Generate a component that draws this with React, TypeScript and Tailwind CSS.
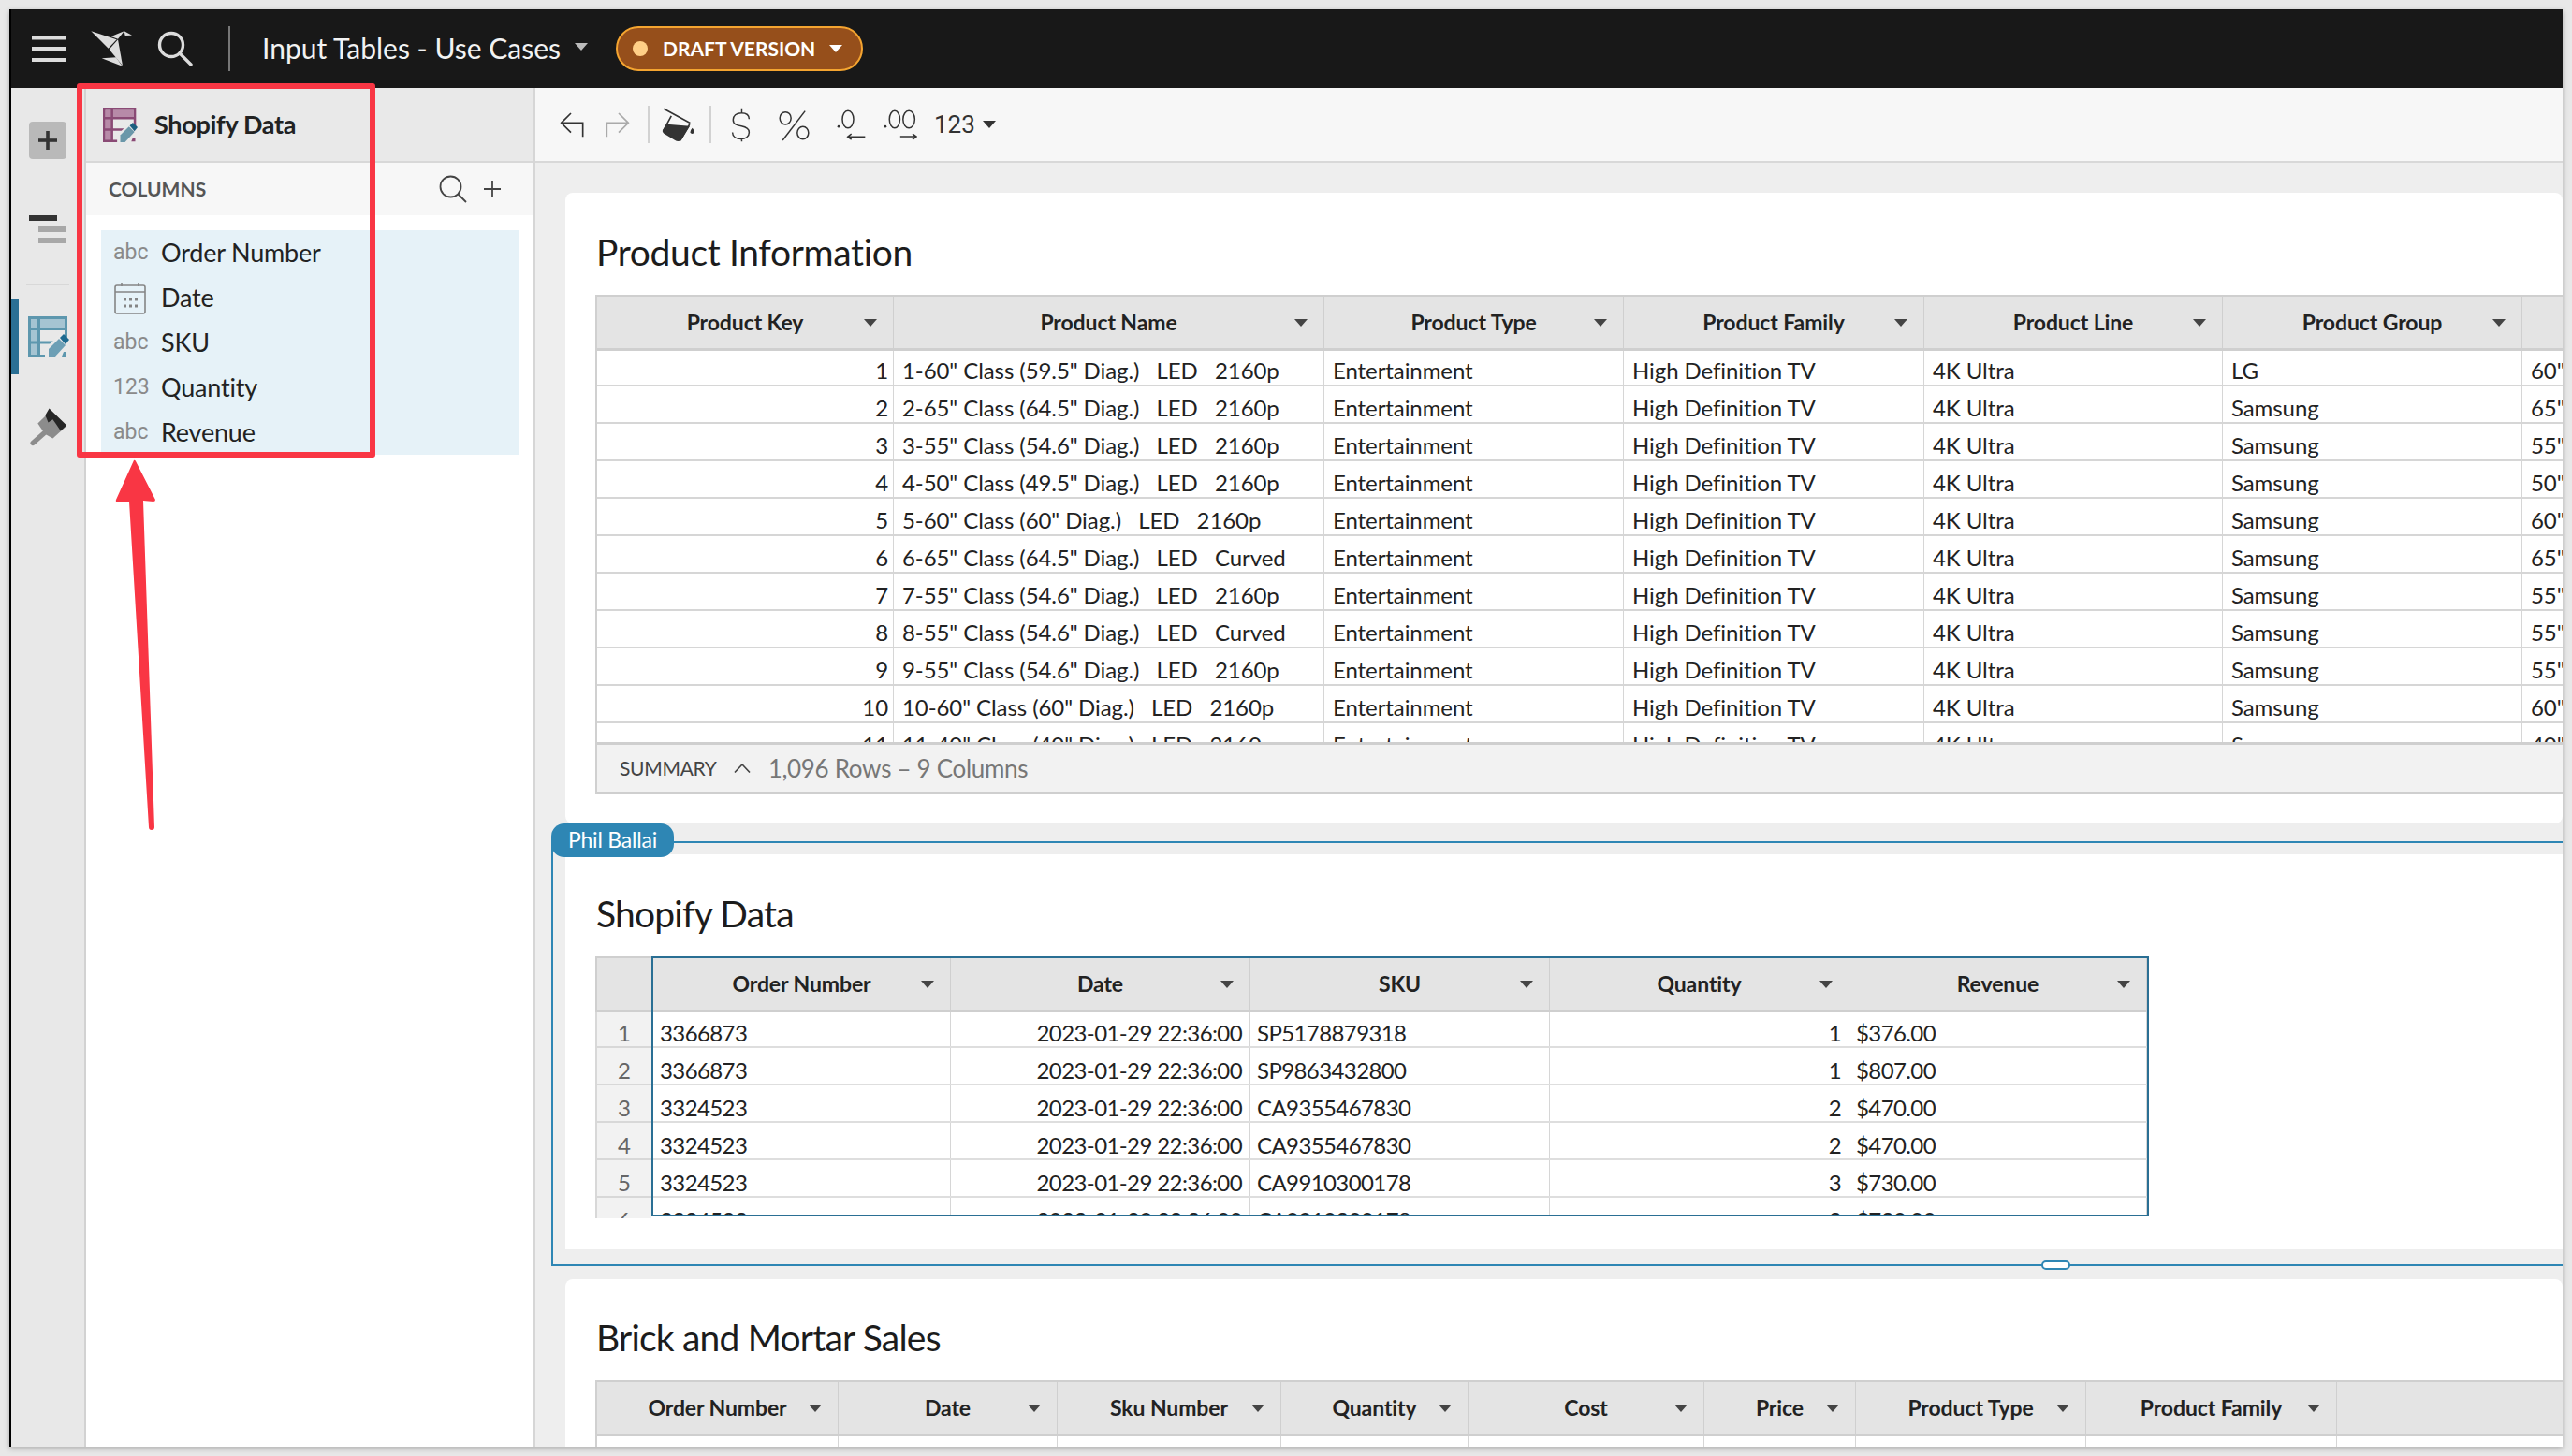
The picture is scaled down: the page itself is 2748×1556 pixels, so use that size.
import React from 'react';

const SANS = "font-['Lato','Noto_Sans',sans-serif]";

const productCols = [
  { label: 'Product Key', w: 'w-[317px]', right: true },
  { label: 'Product Name', w: 'w-[460px]' },
  { label: 'Product Type', w: 'w-[320px]' },
  { label: 'Product Family', w: 'w-[321px]' },
  { label: 'Product Line', w: 'w-[319px]' },
  { label: 'Product Group', w: 'w-[320px]' },
  { label: '', w: 'w-[80px]' },
];

const productRows = [
  ['1', '1-60" Class (59.5" Diag.)   LED   2160p', 'LG', '60"'],
  ['2', '2-65" Class (64.5" Diag.)   LED   2160p', 'Samsung', '65"'],
  ['3', '3-55" Class (54.6" Diag.)   LED   2160p', 'Samsung', '55"'],
  ['4', '4-50" Class (49.5" Diag.)   LED   2160p', 'Samsung', '50"'],
  ['5', '5-60" Class (60" Diag.)   LED   2160p', 'Samsung', '60"'],
  ['6', '6-65" Class (64.5" Diag.)   LED   Curved', 'Samsung', '65"'],
  ['7', '7-55" Class (54.6" Diag.)   LED   2160p', 'Samsung', '55"'],
  ['8', '8-55" Class (54.6" Diag.)   LED   Curved', 'Samsung', '55"'],
  ['9', '9-55" Class (54.6" Diag.)   LED   2160p', 'Samsung', '55"'],
  ['10', '10-60" Class (60" Diag.)   LED   2160p', 'Samsung', '60"'],
  ['11', '11-40" Class (40" Diag.)   LED   2160p', 'Samsung', '40"'],
];

const shopifyCols = [
  { label: 'Order Number', w: 'w-[318px]' },
  { label: 'Date', w: 'w-[320px]' },
  { label: 'SKU', w: 'w-[320px]' },
  { label: 'Quantity', w: 'w-[320px]' },
  { label: 'Revenue', w: 'w-[318px]' },
];

const shopifyRows = [
  ['3366873', 'SP5178879318', '1', '$376.00'],
  ['3366873', 'SP9863432800', '1', '$807.00'],
  ['3324523', 'CA9355467830', '2', '$470.00'],
  ['3324523', 'CA9355467830', '2', '$470.00'],
  ['3324523', 'CA9910300178', '3', '$730.00'],
  ['3324523', 'CA9910300178', '3', '$730.00'],
];

const brickCols = [
  { label: 'Order Number', w: 'w-[258px]' },
  { label: 'Date', w: 'w-[234px]' },
  { label: 'Sku Number', w: 'w-[239px]' },
  { label: 'Quantity', w: 'w-[200px]' },
  { label: 'Cost', w: 'w-[252px]' },
  { label: 'Price', w: 'w-[162px]' },
  { label: 'Product Type', w: 'w-[246px]' },
  { label: 'Product Family', w: 'w-[268px]' },
];

const columns = [
  { type: 'abc', name: 'Order Number' },
  { type: 'date', name: 'Date' },
  { type: 'abc', name: 'SKU' },
  { type: '123', name: 'Quantity' },
  { type: 'abc', name: 'Revenue' },
];

const Caret = ({ color = 'fill-[#444]' }: { color?: string }) => (
  <svg viewBox="0 0 14 8" className={`w-[14px] h-[8px] ${color}`}>
    <path d="M0 0h14L7 8z" />
  </svg>
);

const TableEditIcon = ({ main, light, pencil, tip }: { main: string; light: string; pencil: string; tip: string }) => (
  <svg viewBox="0 0 44 44" className="w-full h-full">
    <rect x="3" y="3" width="36" height="10" fill={light} />
    <rect x="3" y="14" width="8" height="28" fill={light} />
    <rect x="1.5" y="1.5" width="39" height="41" fill="none" stroke={main} strokeWidth="3" />
    <path d="M0 13.5h41M0 28h30M11.5 2v41" stroke={main} strokeWidth="3" fill="none" />
    <path d="M18 44v-9l17-17 9 8v18z" fill="#e9e9e9" />
    <path d="M38 38h3v5h-5zM35 43" fill={main} />
    <path d="M22 44v-9l11-11 7 7-12 13z" fill={pencil} />
    <path d="M34 23l4-4 6 6-4 5z" fill={tip} />
  </svg>
);

function Logo() {
  return (
    <svg viewBox="225 28 144 126" className="w-[48px] h-[42px]" fill="#dcdcdc">
      <path d="M232 35l82 27-27 28z" />
      <path d="M290 93l28-31 15 84z" />
      <path d="M266 122l46-3 20 28z" />
      <path d="M296 52l42-17-20 25z" />
      <path d="M338 35l25 13-22 1z" />
    </svg>
  );
}

function TopBar() {
  return (
    <div className="h-[84px] shrink-0 bg-[#181818] flex items-center">
      <svg viewBox="0 0 36 28" className="ml-[22px] w-[36px] h-[28px]" fill="#dcdcdc">
        <rect y="0" width="36" height="4.5" />
        <rect y="12" width="36" height="4.5" />
        <rect y="24" width="36" height="4.5" />
      </svg>
      <div className="ml-[25px]">
        <Logo />
      </div>
      <svg viewBox="0 0 38 38" className="ml-[25px] w-[38px] h-[38px]" fill="none" stroke="#dcdcdc" strokeWidth="3.4">
        <circle cx="15" cy="15" r="12.5" />
        <path d="M24 24l12 12" strokeLinecap="round" />
      </svg>
      <div className="ml-[38px] w-[2px] h-[48px] bg-[#777]" />
      <span className={`${SANS} ml-[34px] w-[334px] pb-[2px] whitespace-nowrap text-[30px] text-[#f2f2f2]`}>Input Tables - Use Cases</span>
      <Caret color="fill-[#bbb] mb-[5px]" />
      <div className="ml-[30px] w-[264px] h-[48px] rounded-full bg-[#964f1b] border-2 border-[#f4a430] flex items-center">
        <span className="ml-[16px] w-[16px] h-[16px] rounded-full bg-[#ffcf87]" />
        <span className={`${SANS} ml-[16px] w-[178px] whitespace-nowrap text-[21px] font-bold text-white`}>DRAFT VERSION</span>
        <Caret color="fill-white" />
      </div>
    </div>
  );
}

function Rail() {
  return (
    <div className="w-[80px] shrink-0 bg-[#e8e8e8] border-r-2 border-[#d2d2d2] flex flex-col">
      <div className="ml-[19px] mt-[36px] w-[40px] h-[40px] rounded-[4px] bg-[#b9b9b9] flex items-center justify-center">
        <svg viewBox="0 0 20 20" className="w-[20px] h-[20px]" fill="#333">
          <rect x="8.2" width="3.6" height="20" />
          <rect y="8.2" width="20" height="3.6" />
        </svg>
      </div>
      <svg viewBox="0 0 40 30" className="ml-[19px] mt-[60px] w-[40px] h-[30px]">
        <rect width="30" height="6" fill="#333" />
        <rect x="10" y="12" width="30" height="6" fill="#a8a8a8" />
        <rect x="10" y="24" width="30" height="6" fill="#a8a8a8" />
      </svg>
      <div className="ml-[16px] mt-[43px] w-[46px] h-[2px] bg-[#d8d8d8]" />
      <div className="mt-[15px] h-[80px] flex items-center">
        <div className="w-[8px] h-full bg-[#2a6f94]" />
        <div className="ml-[10px] w-[44px] h-[44px]">
          <TableEditIcon main="#5d97ae" light="#a5c4d2" pencil="#6d9fb5" tip="#1d6a90" />
        </div>
      </div>
      <svg viewBox="30 320 125 120" className="ml-[17px] mt-[35px] w-[44px] h-[42px]">
        <path d="M84 402L62 370l36-35 52 43-42 38z" fill="#8c8c8c" />
        <path d="M90 392L47 430" stroke="#8c8c8c" strokeWidth="15" strokeLinecap="round" />
        <path d="M97 324l53 52-18 17-14-21-10-14-14 9-9-22z" fill="#262626" />
      </svg>
    </div>
  );
}

function ColumnsPanel() {
  return (
    <div className="w-[480px] shrink-0 bg-white border-r-2 border-[#d6d6d6] flex flex-col">
      <div className="h-[80px] shrink-0 bg-[#e9e9e9] border-b-2 border-[#d8d8d8] flex items-center pl-[18px]">
        <div className="w-[37px] h-[37px]">
          <TableEditIcon main="#8a4a75" light="#b78aa8" pencil="#6a97a9" tip="#1c5f80" />
        </div>
        <span className={`${SANS} ml-[18px] text-[27px] font-bold tracking-[-0.3px] text-[#222]`}>Shopify Data</span>
      </div>
      <div className="h-[56px] shrink-0 bg-[#f7f7f7] flex items-center pl-[24px]">
        <span className={`${SANS} text-[21px] font-bold text-[#555]`}>COLUMNS</span>
        <svg viewBox="0 0 30 30" className="ml-auto w-[30px] h-[30px]" fill="none" stroke="#444" strokeWidth="1.8">
          <circle cx="12.5" cy="12.5" r="11" />
          <path d="M20.5 20.5L29 29" />
        </svg>
        <svg viewBox="0 0 18 18" className="ml-[18px] mr-[35px] w-[18px] h-[18px]" fill="none" stroke="#444" strokeWidth="1.8">
          <path d="M9 0v18M0 9h18" />
        </svg>
      </div>
      <div className="ml-[16px] mt-[16px] w-[446px] h-[240px] bg-[#e6f2f8] flex flex-col">
        {columns.map((c) => (
          <div key={c.name} className="h-[48px] pt-[1px] flex items-center pl-[13px]">
            <div className="w-[51px]">
              {c.type === 'date' ? (
                <svg viewBox="0 0 34 34" className="ml-[1px] w-[34px] h-[34px]" fill="none" stroke="#858585" strokeWidth="1.6">
                  <rect x="1" y="3" width="32" height="30" rx="2" />
                  <path d="M1 10h32M8 0v4M26 0v4" />
                  <path d="M10 18h3M16 18h3M22 18h3M10 25h3M16 25h3M22 25h3" strokeWidth="3" />
                </svg>
              ) : (
                <span className="font-['Roboto',sans-serif] text-[23px] text-[#8a8a8a]">{c.type}</span>
              )}
            </div>
            <span className={`${SANS} text-[27px] tracking-[-0.2px] text-[#222]`}>{c.name}</span>
          </div>
        ))}
      </div>
    </div>
  );
}

function Toolbar() {
  return (
    <div className="h-[80px] shrink-0 bg-[#f7f7f7] border-b-2 border-[#d8d8d8] flex items-center pl-[24px]">
      <svg viewBox="20 40 90 90" className="w-[30px] h-[30px]" fill="none" stroke="#333" strokeWidth="5">
        <path d="M100 125V80H32M62 49L31 80l31 31" />
      </svg>
      <svg viewBox="170 40 90 90" className="ml-[20px] w-[30px] h-[30px]" fill="none" stroke="#aaa" strokeWidth="5">
        <path d="M177 125V80h68M215 49l31 31-31 31" />
      </svg>
      <div className="ml-[16px] w-[2px] h-[40px] bg-[#d2d2d2]" />
      <svg viewBox="350 25 115 115" className="ml-[12px] w-[38px] h-[38px]">
        <path d="M360 32l85 46M384 55l-26 48M443 82l-30 52" fill="none" stroke="#333" strokeWidth="5" />
        <path d="M370 82l74 6-29 47q-10 5-20-2l-35-21q-8-7-2-14z" fill="#333" />
        <path d="M452 94q8 10 6 14a7 7 0 0 1-13 0q-1-5 7-14z" fill="#333" />
      </svg>
      <div className="ml-[14px] w-[2px] h-[40px] bg-[#d2d2d2]" />
      <svg viewBox="570 25 70 115" className="ml-[20px] w-[23px] h-[38px]" fill="none" stroke="#333" strokeWidth="4.5">
        <path d="M632 65c0-15-12-20-25-20-17 0-27 10-27 22 0 15 12 18 27 21s25 8 25 20c0 14-12 22-26 22-16 0-28-8-28-22M608 30v15M608 130v8" />
      </svg>
      <svg viewBox="720 30 110 105" className="ml-[27px] w-[37px] h-[35px]" fill="none" stroke="#333" strokeWidth="4.5">
        <ellipse cx="747" cy="61" rx="18" ry="20" />
        <ellipse cx="803" cy="108" rx="18" ry="20" />
        <path d="M810 38l-72 94" />
      </svg>
      <svg viewBox="905 30 105 110" className="ml-[25px] w-[35px] h-[37px]" fill="none" stroke="#333" strokeWidth="4.5">
        <ellipse cx="947" cy="67" rx="18" ry="28" />
        <circle cx="917" cy="90" r="4" fill="#333" stroke="none" />
        <path d="M947 123h55M958 114l-12 9 12 9" />
      </svg>
      <svg viewBox="1055 30 115 110" className="ml-[15px] w-[38px] h-[37px]" fill="none" stroke="#333" strokeWidth="4.5">
        <ellipse cx="1097" cy="67" rx="17" ry="28" />
        <ellipse cx="1143" cy="67" rx="19" ry="28" />
        <circle cx="1067" cy="90" r="4" fill="#333" stroke="none" />
        <path d="M1115 123h52M1155 114l12 9-12 9" />
      </svg>
      <span className="ml-[18px] w-[52px] font-['Roboto',sans-serif] text-[26px] text-[#333]">123</span>
      <Caret color="fill-[#333]" />
    </div>
  );
}

const HeaderCell = ({ label, w }: { label: string; w: string }) => (
  <div className={`${w} shrink-0 h-full border-r border-[#cfcfcf] grid grid-cols-[48px_1fr_48px] items-center`}>
    <span />
    <span className={`${SANS} text-center whitespace-nowrap text-[23px] font-bold tracking-[-0.1px] text-[#222]`}>{label}</span>
    {label && (
      <span className="flex justify-center">
        <Caret />
      </span>
    )}
  </div>
);

// digit-heavy cells run tighter: Lato's figures are wider than the rest of its letters
const BodyCell = ({ text, w, right, digits, first }: { text: string; w: string; right?: boolean; digits?: boolean; first?: boolean }) => (
  <div
    className={`${w} shrink-0 h-full border-r border-[#d6d6d6] ${
      digits ? 'pl-[7px] pr-[8px]' : 'pl-[9px] pr-[5px]'
    } ${
      digits ? (first ? 'pt-[8px]' : 'pt-[10px]') : first ? 'pt-[6px]' : 'pt-[8px]'
    } flex items-center overflow-hidden ${right ? 'justify-end' : ''} ${
      digits ? 'tracking-[-0.6px]' : 'tracking-[-0.08px]'
    } ${SANS} whitespace-pre text-[24px] text-[#222]`}
  >
    {text}
  </div>
);

function ProductTable() {
  const widths = productCols.map((c) => c.w);
  return (
    <div className="border-l-2 border-[#d0d0d0]">
      <div className="h-[60px] bg-[#e4e4e4] border-t-2 border-b-[3px] border-[#cfcfcf] flex">
        {productCols.map((c) => (
          <HeaderCell key={c.label} label={c.label} w={c.w} />
        ))}
      </div>
      <div className="h-[418px] overflow-hidden">
        {productRows.map((r, i) => (
          <div key={r[0]} className={`${i === 0 ? 'h-[38px]' : 'h-[40px]'} border-b-2 border-[#d6d6d6] flex`}>
            <BodyCell text={r[0]} w={widths[0]} right first={i === 0} />
            <BodyCell text={r[1]} w={widths[1]} first={i === 0} />
            <BodyCell text="Entertainment" w={widths[2]} first={i === 0} />
            <BodyCell text="High Definition TV" w={widths[3]} first={i === 0} />
            <BodyCell text="4K Ultra" w={widths[4]} first={i === 0} />
            <BodyCell text={r[2]} w={widths[5]} first={i === 0} />
            <BodyCell text={r[3]} w={widths[6]} first={i === 0} />
          </div>
        ))}
      </div>
      <div className="h-[55px] bg-[#f2f2f2] border-t-[3px] border-b-2 border-[#cfcfcf] flex items-center pl-[24px]">
        <span className={`${SANS} text-[21px] tracking-[-0.3px] text-[#444]`}>SUMMARY</span>
        <svg viewBox="0 0 18 10" className="ml-[18px] w-[18px] h-[10px]" fill="none" stroke="#444" strokeWidth="1.6">
          <path d="M1 9.5L9 1l8 8.5" />
        </svg>
        <span className={`${SANS} ml-[19px] text-[26px] tracking-[-0.3px] text-[#777]`}>1,096 Rows – 9 Columns</span>
      </div>
    </div>
  );
}

function ShopifyTable() {
  return (
    <div className="flex h-[280px] overflow-hidden">
      <div className="w-[60px] shrink-0 flex flex-col">
        <div className="h-[60px] shrink-0 bg-[#e4e4e4] border-t-2 border-l-2 border-b-[3px] border-[#cfcfcf]" />
        {shopifyRows.map((_, i) => (
          <div
            key={i}
            className={`${i === 0 ? 'h-[38px] pt-[8px]' : 'h-[40px] pt-[10px]'} shrink-0 bg-[#f2f2f2] border-l-2 border-b-2 border-[#d8d8d8] flex items-center justify-center ${SANS} text-[24px] text-[#666]`}
          >
            {i + 1}
          </div>
        ))}
      </div>
      <div className="w-[1600px] h-[278px] shrink-0 border-2 border-[#2a6f94] overflow-hidden">
        <div className="h-[58px] bg-[#e4e4e4] border-b-[3px] border-[#cfcfcf] flex">
          {shopifyCols.map((c) => (
            <HeaderCell key={c.label} label={c.label} w={c.w} />
          ))}
        </div>
        {shopifyRows.map((r, i) => (
          <div key={i} className={`${i === 0 ? 'h-[38px]' : 'h-[40px]'} border-b-2 border-[#dedede] flex`}>
            <BodyCell text={r[0]} w={shopifyCols[0].w} digits first={i === 0} />
            <BodyCell text="2023-01-29 22:36:00" w={shopifyCols[1].w} right digits first={i === 0} />
            <BodyCell text={r[1]} w={shopifyCols[2].w} digits first={i === 0} />
            <BodyCell text={r[2]} w={shopifyCols[3].w} right digits first={i === 0} />
            <BodyCell text={r[3]} w={shopifyCols[4].w} digits first={i === 0} />
          </div>
        ))}
      </div>
    </div>
  );
}

function BrickTable() {
  return (
    <div className="border-l-2 border-[#d0d0d0]">
      <div className="h-[60px] bg-[#e4e4e4] border-t-2 border-b-[3px] border-[#cfcfcf] flex">
        {brickCols.map((c) => (
          <HeaderCell key={c.label} label={c.label} w={c.w} />
        ))}
      </div>
      <div className="h-[20px] flex">
        {brickCols.map((c) => (
          <div key={c.label} className={`${c.w} shrink-0 border-r border-[#d6d6d6]`} />
        ))}
      </div>
    </div>
  );
}

const SectionTitle = ({ children, tight }: { children: React.ReactNode; tight?: boolean }) => (
  <h2 className={`${SANS} pl-[33px] text-[39px] font-normal ${tight ? 'tracking-[-0.8px]' : 'tracking-[-0.35px]'} text-[#1c1c1c]`}>{children}</h2>
);

function Canvas() {
  return (
    <div className="flex-1 min-h-0 bg-[#eeeeee] pt-[32px] pl-[32px] overflow-hidden">
      <div className="h-[674px] bg-white rounded-[8px] overflow-hidden">
        <div className="h-[109px] pt-[17px] flex items-center">
          <SectionTitle>Product Information</SectionTitle>
        </div>
        <div className="ml-[32px]">
          <ProductTable />
        </div>
      </div>

      <div className="relative h-[455px] pt-[33px]">
        <div className="h-full bg-white overflow-hidden">
          <div className="h-[109px] pt-[17px] flex items-center">
            <SectionTitle tight>Shopify Data</SectionTitle>
          </div>
          <div className="ml-[32px]">
            <ShopifyTable />
          </div>
        </div>
        <div className="absolute left-[-15px] top-[19px] right-0 bottom-[-18px] border-2 border-r-0 border-[#2e86b4] pointer-events-none" />
        <div className={`absolute left-[-15px] top-0 w-[131px] h-[36px] pb-[2px] rounded-[14px] bg-[#2e86b4] flex items-center justify-center ${SANS} text-[23px] tracking-[-0.2px] text-white`}>
          Phil Ballai
        </div>
        <div className="absolute left-[1577px] top-[467px] w-[31px] h-[10px] rounded-full bg-white border-2 border-[#2e86b4]" />
      </div>

      <div className="mt-[32px] h-[200px] bg-white rounded-[8px] overflow-hidden">
        <div className="h-[108px] pt-[17px] flex items-center">
          <SectionTitle tight>Brick and Mortar Sales</SectionTitle>
        </div>
        <div className="ml-[32px]">
          <BrickTable />
        </div>
      </div>
    </div>
  );
}

export default function App() {
  return (
    <div className="relative w-[2748px] h-[1556px] overflow-hidden bg-[#e8e8e8] p-[10px]">
      <div className="w-full h-full flex flex-col overflow-hidden border-l-2 border-black bg-white shadow-[0_2px_6px_rgba(0,0,0,0.25)]">
        <TopBar />
        <div className="flex-1 min-h-0 flex">
          <Rail />
          <ColumnsPanel />
          <div className="flex-1 min-w-0 flex flex-col">
            <Toolbar />
            <Canvas />
          </div>
        </div>
      </div>

      {/* red annotation over the columns panel */}
      <div className="absolute left-[82px] top-[89px] w-[319px] h-[400px] border-[6px] border-[#f93644] rounded-[3px] pointer-events-none" />
      <svg viewBox="0 0 200 400" className="absolute left-0 top-[490px] w-[200px] h-[400px] pointer-events-none" fill="#f93644">
        <path d="M143 2q1-1 2 1l21 41q0 2-2 2l-11-1 12 349q0 3-3 3t-3-3L138 46l-12 1q-3 0-2-3z" />
      </svg>
    </div>
  );
}
